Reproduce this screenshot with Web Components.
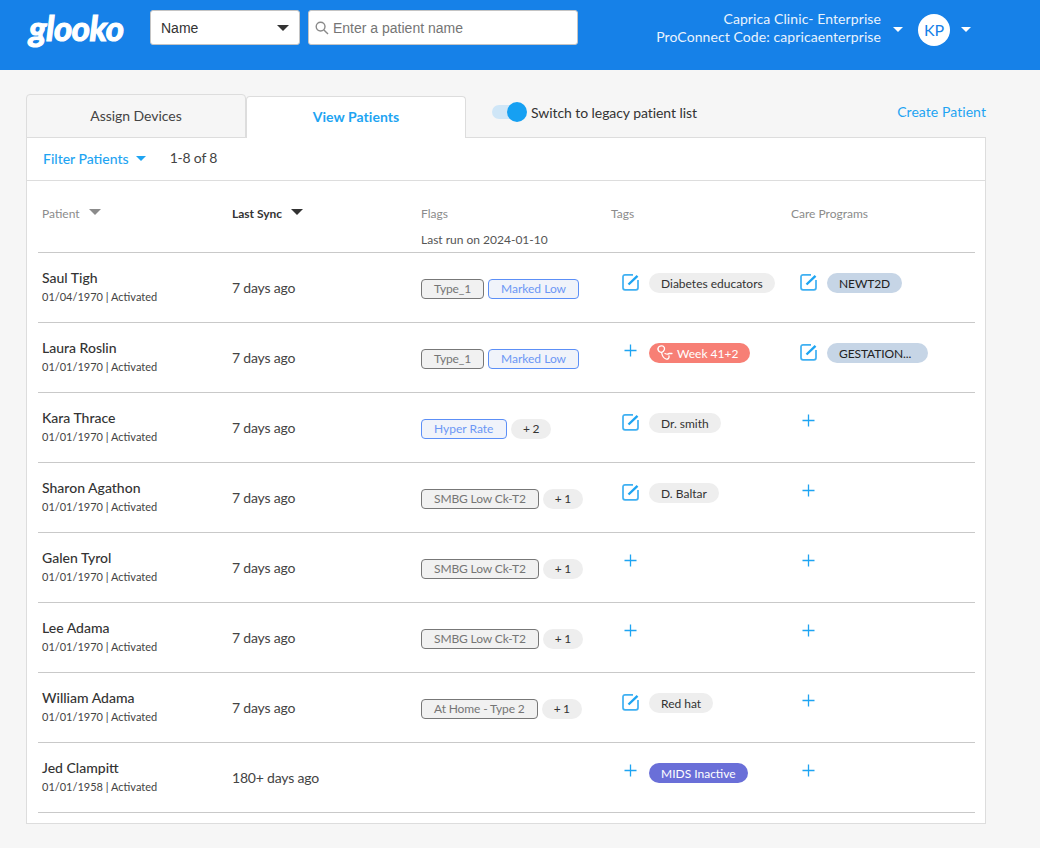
<!DOCTYPE html>
<html>
<head>
<meta charset="utf-8">
<title>Glooko patients</title>
<style>
  body { margin: 0; background: #f6f6f6; font-family: "Lato", "Liberation Sans", sans-serif; color: #444; }
</style>
</head>
<body>
<app-header></app-header>
<patient-page>
  <patient-row name="Saul Tigh" sub="01/04/1970 | Activated" sync="7 days ago">
    <flag-chip slot="flags" kind="grey">Type_1</flag-chip>
    <flag-chip slot="flags" kind="blue">Marked Low</flag-chip>
    <row-icon slot="tags" type="edit"></row-icon>
    <tag-pill slot="tags">Diabetes educators</tag-pill>
    <row-icon slot="care" type="edit"></row-icon>
    <tag-pill slot="care" kind="care">NEWT2D</tag-pill>
  </patient-row>
  <patient-row name="Laura Roslin" sub="01/01/1970 | Activated" sync="7 days ago">
    <flag-chip slot="flags" kind="grey">Type_1</flag-chip>
    <flag-chip slot="flags" kind="blue">Marked Low</flag-chip>
    <row-icon slot="tags" type="plus"></row-icon>
    <tag-pill slot="tags" kind="red" steth>Week 41+2</tag-pill>
    <row-icon slot="care" type="edit"></row-icon>
    <tag-pill slot="care" kind="care" wide>GESTATION...</tag-pill>
  </patient-row>
  <patient-row name="Kara Thrace" sub="01/01/1970 | Activated" sync="7 days ago">
    <flag-chip slot="flags" kind="blue">Hyper Rate</flag-chip>
    <flag-chip slot="flags" kind="more">+ 2</flag-chip>
    <row-icon slot="tags" type="edit"></row-icon>
    <tag-pill slot="tags">Dr. smith</tag-pill>
    <row-icon slot="care" type="plus"></row-icon>
  </patient-row>
  <patient-row name="Sharon Agathon" sub="01/01/1970 | Activated" sync="7 days ago">
    <flag-chip slot="flags" kind="grey">SMBG Low Ck-T2</flag-chip>
    <flag-chip slot="flags" kind="more">+ 1</flag-chip>
    <row-icon slot="tags" type="edit"></row-icon>
    <tag-pill slot="tags">D. Baltar</tag-pill>
    <row-icon slot="care" type="plus"></row-icon>
  </patient-row>
  <patient-row name="Galen Tyrol" sub="01/01/1970 | Activated" sync="7 days ago">
    <flag-chip slot="flags" kind="grey">SMBG Low Ck-T2</flag-chip>
    <flag-chip slot="flags" kind="more">+ 1</flag-chip>
    <row-icon slot="tags" type="plus"></row-icon>
    <row-icon slot="care" type="plus"></row-icon>
  </patient-row>
  <patient-row name="Lee Adama" sub="01/01/1970 | Activated" sync="7 days ago">
    <flag-chip slot="flags" kind="grey">SMBG Low Ck-T2</flag-chip>
    <flag-chip slot="flags" kind="more">+ 1</flag-chip>
    <row-icon slot="tags" type="plus"></row-icon>
    <row-icon slot="care" type="plus"></row-icon>
  </patient-row>
  <patient-row name="William Adama" sub="01/01/1970 | Activated" sync="7 days ago">
    <flag-chip slot="flags" kind="grey">At Home - Type 2</flag-chip>
    <flag-chip slot="flags" kind="more">+ 1</flag-chip>
    <row-icon slot="tags" type="edit"></row-icon>
    <tag-pill slot="tags">Red hat</tag-pill>
    <row-icon slot="care" type="plus"></row-icon>
  </patient-row>
  <patient-row name="Jed Clampitt" sub="01/01/1958 | Activated" sync="180+ days ago">
    <row-icon slot="tags" type="plus"></row-icon>
    <tag-pill slot="tags" kind="purple">MIDS Inactive</tag-pill>
    <row-icon slot="care" type="plus"></row-icon>
  </patient-row>
</patient-page>

<script>
const caret = (color, w, h) =>
  `<svg width="${w}" height="${h}" viewBox="0 0 10 5" preserveAspectRatio="none" style="display:block;flex:none"><path d="M0 0H10L5 5Z" fill="${color}"/></svg>`;

class AppHeader extends HTMLElement {
  constructor() {
    super();
    this.attachShadow({ mode: "open" }).innerHTML = `
      <style>
        :host { display: flex; align-items: flex-start; height: 70px; background: #1681e8; box-sizing: border-box; padding: 10px 0 0 29px; }
        .logo { width: 121px; height: 36px; color: #fff; font: italic 700 35px/34px "Lato", sans-serif; letter-spacing: -.5px; -webkit-text-stroke: 1.2px #fff; flex: none; }
        .select, .search { box-sizing: border-box; height: 35px; background: #fff; border: 1px solid #c4c4c4; border-radius: 3px; display: flex; align-items: center; font: 14px "Liberation Sans", sans-serif; flex: none; }
        .select { width: 150px; padding: 0 10px 0 10px; justify-content: space-between; color: #333; }
        .search { width: 270px; margin-left: 8px; padding-left: 6px; gap: 4px; color: #757575; }
        .right { margin-left: auto; display: flex; align-items: flex-start; padding-right: 69px; color: #e9f3fd; font-size: 14px; line-height: 18px; }
        .clinic { text-align: right; letter-spacing: .09px; }
        .clinic + div { margin: 17px 0 0 12px; }
        .kp { width: 32px; height: 32px; margin: 4px 0 0 15px; border-radius: 50%; background: #fff; color: #1681e8; font-size: 16px; display: flex; align-items: center; justify-content: center; }
        .kp + div { margin: 17px 0 0 11px; }
      </style>
      <div class="logo">glooko</div>
      <div class="select"><span>Name</span>${caret("#333", 12, 6)}</div>
      <div class="search">
        <svg width="14" height="14" viewBox="0 0 14 14" fill="none" stroke="#8a8a8a" stroke-width="1.4"><circle cx="5.6" cy="5.6" r="4.4"/><path d="M8.9 8.9 13 13"/></svg>
        <span>Enter a patient name</span>
      </div>
      <div class="right">
        <div class="clinic">Caprica Clinic- Enterprise<br>ProConnect Code: capricaenterprise</div>
        <div>${caret("#fff", 10, 5)}</div>
        <div class="kp">KP</div>
        <div>${caret("#fff", 10, 5)}</div>
      </div>`;
  }
}
customElements.define("app-header", AppHeader);

class PatientPage extends HTMLElement {
  constructor() {
    super();
    this.attachShadow({ mode: "open" }).innerHTML = `
      <style>
        :host { display: block; width: 960px; margin: 24px 0 0 26px; font-size: 14px; }
        .tabs { display: flex; align-items: flex-end; height: 44px; margin-bottom: -1px; position: relative; }
        .tab { box-sizing: border-box; width: 220px; display: flex; align-items: center; justify-content: center; border: 1px solid #ddd; border-radius: 4px 4px 0 0; }
        .off { height: 44px; background: #f6f6f6; color: #444; border-bottom: 1px solid #ddd; padding-bottom: 1px; letter-spacing: -.05px; }
        .on { height: 42px; background: #fff; color: #1ea4f2; font-weight: 700; border-bottom: 0; padding-bottom: 2px; letter-spacing: .05px; }
        .switch { align-self: flex-start; display: flex; align-items: center; margin: 10px 0 0 26px; color: #333; letter-spacing: -.07px; }
        .track { width: 34px; height: 14px; border-radius: 7px; background: #cfe6f7; position: relative; margin: -1px 5px 0 0; }
        .knob { position: absolute; left: 15px; top: -3px; width: 20px; height: 20px; border-radius: 50%; background: #16a0f2; }
        .create { align-self: flex-start; margin: 9px 0 0 auto; color: #1ea4f2; letter-spacing: .07px; }
        .panel { box-sizing: border-box; background: #fff; border: 1px solid #ddd; height: 687px; }
        .filter { height: 43px; box-sizing: border-box; border-bottom: 1px solid #ddd; display: flex; align-items: center; padding-left: 16px; }
        .fp { color: #1ea4f2; font-weight: 500; display: flex; align-items: center; gap: 7px; margin-top: -1px; }
        .count { margin: -4px 0 0 24px; color: #444; letter-spacing: -.2px; }
        .list { padding: 0 10px 0 11px; }
        .head { display: grid; grid-template-columns: 190px 189px 190px 180px 1fr; height: 72px; box-sizing: border-box; padding: 0 0 0 4px; border-bottom: 1px solid #c9c9c9; font-size: 12px; color: #8b8b8b; }
        .head > div { padding-top: 26px; line-height: 14px; }
        .h { display: flex; align-items: center; gap: 9px; }
        .h svg { margin-top: -4px; }
        .bold { color: #333; font-weight: 700; }
        .run { color: #555; margin-top: 12px; white-space: nowrap; }
      </style>
      <div class="tabs">
        <div class="tab off">Assign Devices</div>
        <div class="tab on">View Patients</div>
        <div class="switch"><div class="track"><div class="knob"></div></div>Switch to legacy patient list</div>
        <div class="create">Create Patient</div>
      </div>
      <div class="panel">
        <div class="filter">
          <div class="fp">Filter Patients ${caret("#1ea4f2", 10, 5)}</div>
          <div class="count">1-8 of 8</div>
        </div>
        <div class="list">
          <div class="head">
            <div><div class="h">Patient ${caret("#8b8b8b", 12, 6)}</div></div>
            <div><div class="h bold">Last Sync ${caret("#333", 12, 6)}</div></div>
            <div>Flags<div class="run">Last run on 2024-01-10</div></div>
            <div>Tags</div>
            <div>Care Programs</div>
          </div>
          <slot></slot>
        </div>
      </div>`;
  }
}
customElements.define("patient-page", PatientPage);

class PatientRow extends HTMLElement {
  constructor() {
    super();
    this.attachShadow({ mode: "open" }).innerHTML = `
      <style>
        :host { display: grid; grid-template-columns: 190px 189px 190px 180px 1fr; height: 70px; box-sizing: border-box; padding-left: 4px; border-bottom: 1px solid #c9c9c9; color: #444; }
        .name { font-size: 14px; font-weight: 500; color: #333; line-height: 18px; margin-top: 16px; }
        .sub { font-size: 11px; line-height: 14px; margin-top: 3px; color: #444; }
        .sync { font-size: 14px; line-height: 18px; margin-top: 26px; letter-spacing: -.2px; }
        .flags { display: flex; gap: 4px; align-items: flex-start; padding-top: 26px; }
        .tags, .care { display: flex; gap: 10px; align-items: flex-start; padding-top: 18px; }
        .tags { padding-left: 11px; }
        .care { padding-left: 9px; }
      </style>
      <div><div class="name"></div><div class="sub"></div></div>
      <div class="sync"></div>
      <div class="flags"><slot name="flags"></slot></div>
      <div class="tags"><slot name="tags"></slot></div>
      <div class="care"><slot name="care"></slot></div>`;
  }
  connectedCallback() {
    this.shadowRoot.querySelector(".name").textContent = this.getAttribute("name");
    this.shadowRoot.querySelector(".sub").textContent = this.getAttribute("sub");
    this.shadowRoot.querySelector(".sync").textContent = this.getAttribute("sync");
  }
}
customElements.define("patient-row", PatientRow);

class FlagChip extends HTMLElement {
  constructor() {
    super();
    this.attachShadow({ mode: "open" }).innerHTML = `
      <style>
        :host { display: block; box-sizing: border-box; height: 20px; padding: 0 12px; border: 1px solid #777; border-radius: 4px; background: #f1f1f1; color: #757575; font-size: 12px; line-height: 18px; white-space: nowrap; letter-spacing: -.13px; }
        :host([kind="blue"]) { border-color: #5c8ff7; background: #f0f3fa; color: #6c97f5; letter-spacing: 0; min-width: 86px; }
        :host([kind="more"]) { border: 0; border-radius: 10px; background: #eee; color: #333; line-height: 20px; letter-spacing: -.3px; }
      </style><slot></slot>`;
  }
}
customElements.define("flag-chip", FlagChip);

class TagPill extends HTMLElement {
  constructor() {
    super();
    const icon = this.hasAttribute("steth")
      ? `<svg width="16" height="16" viewBox="0 0 16 16" fill="none" stroke="#fff" stroke-width="1.3" stroke-linecap="round" style="flex:none"><path d="M1 4C1 1.8 3 .6 5 .9 7 1.2 8 3 7.2 5 6.8 6 5.8 7 4.6 7.5"/><path d="M1 4C1 6 3 7.2 4.6 7.5 5 10 6 13 9 14 11 14.6 12.5 13 12 10.8"/><path d="M8 8.5C10 9.5 11 9.5 12 8.5H15"/></svg>`
      : "";
    this.attachShadow({ mode: "open" }).innerHTML = `
      <style>
        :host { display: flex; align-items: center; gap: 4px; box-sizing: border-box; height: 20px; margin-top: 2px; padding: 0 12px; border-radius: 10px; background: #eee; color: #333; font-size: 12px; white-space: nowrap; }
        :host([steth]) { padding-left: 8px; }
        :host([kind="red"]) { background: #f77f75; color: #fff; }
        :host([kind="purple"]) { background: #6a6fd8; color: #fff; }
        :host([kind="care"]) { background: #c6d5e6; color: #222; letter-spacing: -.1px; }
        :host([wide]) { width: 101px; }
      </style>${icon}<slot></slot>`;
  }
}
customElements.define("tag-pill", TagPill);

class RowIcon extends HTMLElement {
  constructor() {
    super();
    const edit = `<svg width="18" height="18" viewBox="0 0 18 18" fill="none" stroke="#3fb0f2" stroke-width="1.7"><path d="M11 1.8H3a2 2 0 0 0-2 2v11a2 2 0 0 0 2 2h11a2 2 0 0 0 2-2V7"/><path d="M6.5 11.5 15.5 2.8" stroke="#1ea4f2" stroke-width="2.4"/></svg>`;
    const plus = `<svg width="17" height="17" viewBox="0 0 17 17" fill="none" stroke="#1ea4f2" stroke-width="1.3"><path d="M2.5 8.5h12M8.5 2.5v12"/></svg>`;
    this.attachShadow({ mode: "open" }).innerHTML = `
      <style>:host { display: block; width: 17px; height: 17px; flex: none; margin-top: 1px; } :host([type="edit"]) { margin-top: 2px; }</style>
      ${this.getAttribute("type") === "edit" ? edit : plus}`;
  }
}
customElements.define("row-icon", RowIcon);
</script>
</body>
</html>
